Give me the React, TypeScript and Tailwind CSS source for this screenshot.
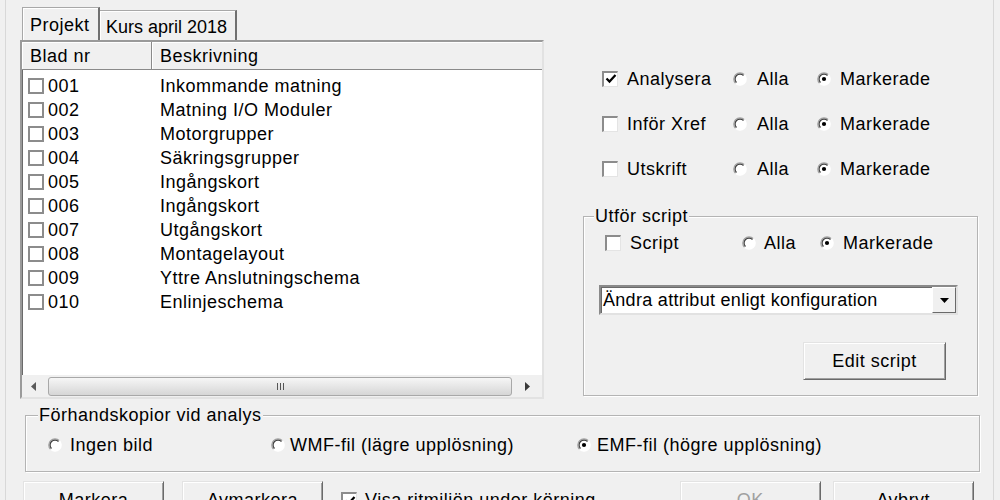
import React from "react";

const Radio = ({ checked }: { checked?: boolean }) => (
  <svg width="14" height="14" viewBox="0 0 14 14" className="shrink-0">
    <circle cx="7" cy="7" r="6.2" fill="#ffffff" />
    <path d="M11.4 2.6 A6.22 6.22 0 0 0 2.6 11.4" stroke="#a0a0a0" strokeWidth="1.2" fill="none" />
    <path d="M10.5 3.5 A4.95 4.95 0 0 0 3.5 10.5" stroke="#404040" strokeWidth="1.2" fill="none" />
    <path d="M2.6 11.4 A6.22 6.22 0 0 0 11.4 2.6" stroke="#ffffff" strokeWidth="1.2" fill="none" />
    {checked && <circle cx="7" cy="7" r="2.1" fill="#000000" />}
  </svg>
);

const Check3D = ({ checked }: { checked?: boolean }) => (
  <span className="w-[16px] h-[16px] shrink-0 bg-white border-t-2 border-l-2 border-t-[#8c8c8c] border-l-[#8c8c8c] border-b border-r border-b-[#e4e4e4] border-r-[#e4e4e4] flex items-center justify-center">
    {checked && (
      <svg width="12" height="12" viewBox="0 0 12 12">
        <path d="M1.5 5.5 L4.5 8.6 L10.5 2" stroke="#000" strokeWidth="2.2" fill="none" />
      </svg>
    )}
  </span>
);

const Btn = ({
  children,
  className,
  disabled,
}: {
  children: React.ReactNode;
  className: string;
  disabled?: boolean;
}) => (
  <div
    className={
      "shrink-0 flex items-center justify-center bg-[#f0f0f0] border border-t-[#e3e3e3] border-l-[#e3e3e3] border-r-[#6a6a6a] border-b-[#6a6a6a] shadow-[inset_1px_1px_0_#ffffff,inset_-1px_-1px_0_#a0a0a0] " +
      (disabled ? "text-[#a0a0a0] " : "text-black ") +
      className
    }
  >
    {children}
  </div>
);

const rows: [string, string][] = [
  ["001", "Inkommande matning"],
  ["002", "Matning I/O Moduler"],
  ["003", "Motorgrupper"],
  ["004", "Säkringsgrupper"],
  ["005", "Ingångskort"],
  ["006", "Ingångskort"],
  ["007", "Utgångskort"],
  ["008", "Montagelayout"],
  ["009", "Yttre Anslutningschema"],
  ["010", "Enlinjeschema"],
];

const OptionRow = ({ label, checked }: { label: string; checked?: boolean }) => (
  <div className="h-[45px] shrink-0 flex items-center pl-[19px]">
    <div className="w-[131px] flex items-center">
      <Check3D checked={checked} />
      <span className="ml-[9px]">{label}</span>
    </div>
    <div className="w-[84px] flex items-center">
      <Radio />
      <span className="ml-[10px]">Alla</span>
    </div>
    <div className="flex items-center">
      <Radio checked />
      <span className="ml-[9px]">Markerade</span>
    </div>
  </div>
);

export default function App() {
  return (
    <div className="w-[1000px] h-[500px] bg-[#f0f0f0] overflow-hidden font-['Liberation_Sans',Arial,sans-serif] text-[18px] tracking-[0.5px] text-black leading-none">
      <div className="ml-[5px] w-[989px] h-full border-l border-r border-[#d8d8d8] flex flex-col">
        {/* top section */}
        <div className="flex shrink-0">
          {/* left column */}
          <div className="ml-[14px] w-[524px] flex flex-col shrink-0">
            <div className="pt-[7px] flex items-end pl-[2px] h-[40px] shrink-0">
              <div className="w-[78px] h-[33px] border-t border-l border-r-2 border-t-[#a8a8a8] border-l-[#a8a8a8] border-r-[#707070] shadow-[inset_1px_1px_0_#ffffff] flex items-start pt-[8px] pl-[7px]">
                Projekt
              </div>
              <div className="w-[137px] h-[30px] border-t border-r-2 border-t-[#a8a8a8] border-r-[#707070] shadow-[inset_1px_1px_0_#ffffff] flex items-start pt-[7px] pl-[6px] tracking-[0px]">
                Kurs april 2018
              </div>
            </div>
            <div className="h-[359px] shrink-0 bg-white border-2 border-t-[#9a9a9a] border-l-[#9a9a9a] border-r-[#e2e2e2] border-b-[#e2e2e2] shadow-[inset_1px_1px_0_#6a6a6a] flex flex-col">
              <div className="h-[28px] flex bg-[#f0f0f0] border-b border-[#8a8a8a] shrink-0">
                <div className="w-[130px] h-full flex items-center pl-[8px] border-r border-[#8a8a8a] shadow-[inset_1px_1px_0_#ffffff]">
                  Blad nr
                </div>
                <div className="flex-1 h-full flex items-center pl-[8px] shadow-[inset_1px_1px_0_#ffffff]">
                  Beskrivning
                </div>
              </div>
              <div className="flex-1 pt-[4px]">
                {rows.map(([n, d]) => (
                  <div key={n} className="h-[24px] flex items-center">
                    <div className="w-[138px] flex items-center pl-[6px]">
                      <span className="block w-[16px] h-[16px] border-2 border-[#8c8c8c] bg-white" />
                      <span className="ml-[4px]">{n}</span>
                    </div>
                    <span>{d}</span>
                  </div>
                ))}
              </div>
              <div className="h-[22px] shrink-0 bg-[#f0f0f0] flex items-center">
                <div className="w-[24px] h-full flex items-center justify-center">
                  <svg width="6" height="9" viewBox="0 0 6 9">
                    <path d="M5 0 L0 4.5 L5 9 Z" fill="#5a5a5a" />
                  </svg>
                </div>
                <div className="ml-[2px] w-[464px] h-[19px] rounded-[3px] border border-[#a8a8a8] bg-gradient-to-b from-[#f6f6f6] to-[#d6d6d6] flex items-center justify-center gap-[2px]">
                  <span className="w-[1px] h-[7px] bg-[#555]" />
                  <span className="w-[1px] h-[7px] bg-[#555]" />
                  <span className="w-[1px] h-[7px] bg-[#555]" />
                </div>
                <div className="flex-1 h-full flex items-center justify-center">
                  <svg width="6" height="9" viewBox="0 0 6 9">
                    <path d="M1 0 L6 4.5 L1 9 Z" fill="#3a3a3a" />
                  </svg>
                </div>
              </div>
            </div>
          </div>
          {/* right column */}
          <div className="ml-[39px] w-[395px] flex flex-col pt-[56px] shrink-0">
            <OptionRow label="Analysera" checked />
            <OptionRow label="Inför Xref" />
            <OptionRow label="Utskrift" />
            <fieldset className="mt-[15px] h-[190px] shrink-0 border border-[#b4b4b4] shadow-[inset_1px_1px_0_#ffffff,1px_1px_0_#ffffff] p-0 m-0 min-w-0">
              <legend className="ml-[10px] px-[1px] leading-[20px] bg-[#f0f0f0]">Utför script</legend>
              <div className="mt-[5px] h-[24px] flex items-center pl-[21px]">
                <div className="w-[137px] flex items-center">
                  <Check3D />
                  <span className="ml-[9px]">Script</span>
                </div>
                <div className="w-[78px] flex items-center">
                  <Radio />
                  <span className="ml-[8px]">Alla</span>
                </div>
                <div className="flex items-center">
                  <Radio checked />
                  <span className="ml-[9px]">Markerade</span>
                </div>
              </div>
              <div className="mt-[30px] ml-[15px] w-[359px] h-[30px] bg-white border-2 border-t-[#8a8a8a] border-l-[#8a8a8a] border-r-[#e2e2e2] border-b-[#e2e2e2] shadow-[inset_1px_1px_0_#6a6a6a] flex items-center">
                <span className="flex-1 pl-[2px] tracking-[0.3px]">Ändra attribut enligt konfiguration</span>
                <div className="w-[24px] h-full bg-[#f0f0f0] border border-t-[#ffffff] border-l-[#ffffff] border-r-[#6a6a6a] border-b-[#6a6a6a] flex items-center justify-center">
                  <svg width="9" height="5" viewBox="0 0 9 5">
                    <path d="M0 0 L9 0 L4.5 5 Z" fill="#000" />
                  </svg>
                </div>
              </div>
              <Btn className="mt-[27px] ml-[219px] w-[143px] h-[38px]">Edit script</Btn>
            </fieldset>
          </div>
        </div>
        {/* bottom group */}
        <fieldset className="mt-[6px] ml-[19px] w-[955px] h-[67px] shrink-0 border border-[#b4b4b4] shadow-[inset_1px_1px_0_#ffffff,1px_1px_0_#ffffff] p-0 min-w-0">
          <legend className="ml-[12px] px-[1px] leading-[20px] bg-[#f0f0f0]">Förhandskopior vid analys</legend>
          <div className="mt-[8px] h-[24px] flex items-center pl-[22px]">
            <div className="w-[223px] flex items-center">
              <Radio />
              <span className="ml-[8px]">Ingen bild</span>
            </div>
            <div className="w-[306px] flex items-center">
              <Radio />
              <span className="ml-[5px]">WMF-fil (lägre upplösning)</span>
            </div>
            <div className="flex items-center">
              <Radio checked />
              <span className="ml-[6px]">EMF-fil (högre upplösning)</span>
            </div>
          </div>
        </fieldset>
        {/* buttons */}
        <div className="mt-[9px] flex items-start shrink-0">
          <Btn className="ml-[17px] w-[141px] h-[38px]">Markera</Btn>
          <Btn className="ml-[18px] w-[141px] h-[38px]">Avmarkera</Btn>
          <div className="ml-[18px] h-[38px] flex items-center shrink-0">
            <Check3D checked />
            <span className="ml-[8px]">Visa ritmiljön under körning</span>
          </div>
          <Btn disabled className="ml-[84px] w-[141px] h-[38px]">OK</Btn>
          <Btn className="ml-[12px] w-[141px] h-[38px]">Avbryt</Btn>
        </div>
      </div>
    </div>
  );
}
